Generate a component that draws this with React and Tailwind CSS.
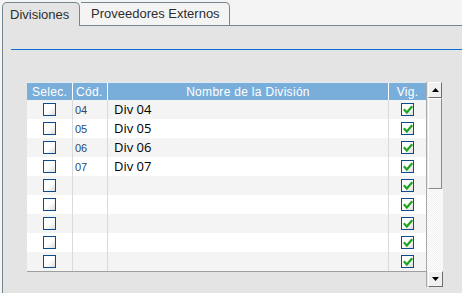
import React from 'react';

const ROWS = [
  { code: '04', name: 'Div 04' },
  { code: '05', name: 'Div 05' },
  { code: '06', name: 'Div 06' },
  { code: '07', name: 'Div 07' },
  { code: '', name: '' },
  { code: '', name: '' },
  { code: '', name: '' },
  { code: '', name: '' },
  { code: '', name: '' },
];

function Checkbox({ checked }) {
  return (
    <div className="w-[13px] h-[13px] border border-solid border-[#0f4a8c] bg-linear-to-br from-white via-white to-[#dcdcdc] flex items-center justify-center">
      {checked && (
        <svg width="10" height="10" viewBox="0 0 10 10" fill="none">
          <path d="M1.5 5 L3.8 7.5 L8.5 2" stroke="#1fa51f" strokeWidth="2.2" strokeLinecap="square" />
        </svg>
      )}
    </div>
  );
}

function Scrollbar() {
  return (
    <div className="w-[17px] flex flex-col h-[205px] border-l border-[#a8a8a8]">
      {/* up arrow */}
      <div className="h-[16px] mx-[1px] bg-[#f0f0f0] border border-t-white border-l-white border-r-[#6d6d6d] border-b-[#6d6d6d] flex items-center justify-center">
        <svg width="7" height="4" viewBox="0 0 7 4"><path d="M0 4 L3.5 0 L7 4 Z" fill="#000" /></svg>
      </div>
      {/* thumb */}
      <div className="h-[91px] mx-[1px] bg-[#efefef] border border-t-white border-l-white border-r-[#8a8a8a] border-b-[#8a8a8a]" />
      {/* track */}
      <div className="flex-1 bg-[repeating-conic-gradient(#ffffff_0%_25%,#f0f0f0_0%_50%)] bg-size-[2px_2px]" />
      {/* down arrow */}
      <div className="h-[16px] ml-[1px] bg-[#f0f0f0] border border-t-white border-l-white border-r-[#6d6d6d] border-b-[#6d6d6d] flex items-center justify-center">
        <svg width="7" height="4" viewBox="0 0 7 4"><path d="M0 0 L3.5 4 L7 0 Z" fill="#000" /></svg>
      </div>
    </div>
  );
}

export default function App() {
  return (
    <div className="w-[462px] h-[293px] bg-[#f4f4f4] flex flex-col overflow-hidden" style={{ fontFamily: '"Liberation Sans", Arial, sans-serif' }}>
      {/* Tabs */}
      <div className="h-[25px] pl-[2px] pt-[1px] flex items-end">
        <div className="relative z-10 h-[24px] w-[78px] -mb-px bg-[#e4e4e4] border border-b-0 border-[#75868f] rounded-t-[5px] flex items-center pl-[7px] text-[13px] text-[#2e2e2e]">
          Divisiones
        </div>
        <div className="h-[23px] w-[149px] ml-[1px] bg-[#f4f4f4] border border-b-0 border-l-0 border-[#75868f] rounded-tr-[5px] flex items-center pl-[10px] text-[13px] text-[#2e2e2e]">
          Proveedores Externos
        </div>
      </div>

      {/* Panel */}
      <div className="flex-1 ml-[2px] bg-[#e4e4e4] border-l border-t border-[#75868f] flex flex-col">
        <div className="mt-[23px] ml-[8px] h-[1px] bg-[#0a6fd6]" />

        <div className="mt-[32px] ml-[24px] flex items-start">
          <div className="w-[399px] border-b border-[#9f9f9f] bg-white">
            {/* header */}
            <div className="grid grid-cols-[45px_35px_281px_38px] h-[18px] bg-[#79aedb] text-white text-[12px] border-t border-[#dfeaf5] tracking-[0.3px]">
              <div className="flex items-center justify-center">Selec.</div>
              <div className="flex items-center pl-[3px] border-l border-white">Cód.</div>
              <div className="flex items-center justify-center border-l border-white">Nombre de la División</div>
              <div className="flex items-center justify-center border-l border-white">Vig.</div>
            </div>
            {/* rows */}
            {ROWS.map((r, i) => (
              <div key={i} className={`grid grid-cols-[45px_35px_281px_38px] h-[19px] ${i % 2 === 0 ? 'bg-[#f4f4f4]' : 'bg-white'}`}>
                <div className="flex items-center justify-center">
                  <Checkbox />
                </div>
                <div className="flex items-center pl-[2px] border-l border-[#dadada] text-[11px] text-[#2c4a70]">{r.code}</div>
                <div className="flex items-center pl-[6px] border-l border-[#dadada] text-[13px] text-black" style={{ fontFamily: '"Open Sans", "Noto Sans", sans-serif' }}>
                  {r.name}
                </div>
                <div className="flex items-center justify-center border-l border-[#dadada]">
                  <Checkbox checked />
                </div>
              </div>
            ))}
          </div>
          <Scrollbar />
        </div>
      </div>
    </div>
  );
}
